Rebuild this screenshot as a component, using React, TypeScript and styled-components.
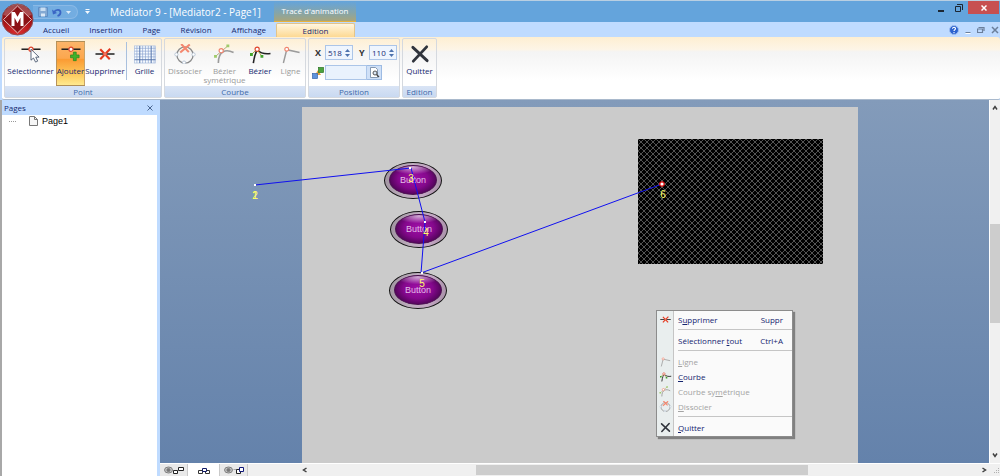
import React from "react";
import styled, { createGlobalStyle, css } from "styled-components";

const Global = createGlobalStyle`
  * { box-sizing: border-box; }
  body { margin: 0; }
  body, button, input { font-family: "Open Sans", "Noto Sans", sans-serif; font-size: 8px; line-height: 10px; color: #15286f; }
  button { border: 0; padding: 0; background: none; }
  svg { display: block; flex: none; }
`;

const Window = styled.div`
  display: flex;
  flex-direction: column;
  height: 100vh;
  min-height: 476px;
  background: #bfdbff;
  position: relative;
  overflow: hidden;
`;

const TitleBar = styled.header`
  display: flex;
  align-items: flex-start;
  height: 22px;
  padding-left: 33px;
  border-top: 1px solid #b9cfe2;
  background: #64a4dc;
`;

const QuickAccess = styled.div`
  display: flex;
  align-items: center;
  gap: 4px;
  width: 45px;
  height: 14px;
  margin-top: 4px;
  padding-left: 5px;
  border: 1px solid #8ab9e6;
  border-left: 0;
  border-radius: 0 7px 7px 0;
  background: #73ade1;
`;

const QuickButton = styled.button`
  display: flex;
  align-items: center;
  justify-content: center;
  height: 12px;
`;

const Customize = styled(QuickButton)`
  width: 18px;
  height: 20px;
`;

const Title = styled.h1`
  margin: 0 0 0 14px;
  width: 164px;
  font-size: 10px;
  font-weight: 400;
  line-height: 22px;
  color: #fff;
  white-space: nowrap;
`;

const ContextTitle = styled.div`
  width: 82px;
  height: 21px;
  border-bottom: 1px solid #e8b23c;
  background: linear-gradient(#64a4dc, #86a5a8 60%, #a8a57c);
  color: #fff;
  text-align: center;
  line-height: 19px;
  white-space: nowrap;
`;

const Spacer = styled.div`
  flex: 1;
`;

const WindowButton = styled.button<{ $close?: boolean }>`
  display: flex;
  align-items: center;
  justify-content: center;
  width: ${(p) => (p.$close ? 31 : 18)}px;
  height: 13px;
  margin-right: ${(p) => (p.$close ? 1 : 0)}px;
  background: ${(p) => (p.$close ? "#c75050" : "none")};
`;

const Orb = styled.button`
  position: absolute;
  left: 1px;
  top: 3px;
  z-index: 2;
`;

const TabRow = styled.nav`
  display: flex;
  align-items: stretch;
  height: 15px;
  padding-left: 33px;
  background: #bfdbff;
`;

const Tab = styled.button<{ $active?: boolean }>`
  padding: 0 10px;
  line-height: 14px;
  white-space: nowrap;
  ${(p) =>
    p.$active &&
    css`
      width: 79px;
      margin-top: 1px;
      border: 1px solid #e3c48a;
      border-bottom: 0;
      border-radius: 2px 2px 0 0;
      background: linear-gradient(#fff6e0, #fdd993);
      line-height: 12px;
    `}
`;

const DocControls = styled.div`
  display: flex;
  align-items: center;
  gap: 6px;
  padding-right: 1px;
`;

const IconButton = styled.button`
  display: flex;
  align-items: center;
  justify-content: center;
`;

const Ribbon = styled.section`
  display: flex;
  gap: 2px;
  margin-left: 2px;
  padding: 1px 2px 1px;
  border-radius: 3px 3px 2px 2px;
  border-bottom: 1px solid #a9b9cc;
  background: linear-gradient(#feefd2, #fdf5e6 20%, #f4f4f4 24%, #fafafa 50%, #fff 70%);
`;

const Group = styled.div`
  display: flex;
  flex-direction: column;
  border: 1px solid #d5d9df;
  border-radius: 2px;
`;

const GroupBody = styled.div`
  display: flex;
  height: 47px;
  padding-top: 2px;
`;

const GroupLabel = styled.div`
  height: 11px;
  background: linear-gradient(#d9e4f5, #c9d9f1);
  color: #3e6aaa;
  text-align: center;
  line-height: 11px;
`;

const Tool = styled.button<{ $w: number; $on?: boolean; $off?: boolean }>`
  display: flex;
  flex-direction: column;
  align-items: center;
  gap: 2px;
  width: ${(p) => p.$w}px;
  padding-top: 2px;
  line-height: 9px;
  color: ${(p) => (p.$off ? "#9a9a9a" : "#15286f")};
  white-space: pre;
  border: 1px solid transparent;
  border-width: 1px 0;
  ${(p) =>
    p.$on &&
    css`
      background: linear-gradient(#fbb469, #fca74e 38%, #fb9a33 40%, #fdc95c 75%, #ffe98f);
      border-color: #b08e57;
      box-shadow: inset 1px 0 #b9935a, inset -1px 0 #c9a368;
    `}
`;

const Separator = styled.div`
  width: 1px;
  height: 38px;
  margin: 1px 1px 0;
  background: #a9c0de;
`;

const PositionBody = styled(GroupBody)`
  flex-direction: column;
  gap: 5px;
  padding: 6px 2px 0 3px;
`;

const FieldRow = styled.div`
  display: flex;
  align-items: center;
  height: 15px;
`;

const AxisLabel = styled.label`
  width: 13px;
  padding-left: 3px;
  font-weight: 700;
  font-size: 9px;
  color: #333;
`;

const Field = styled.span`
  display: flex;
  align-items: center;
  width: 28px;
  height: 15px;
  margin-right: 3px;
  border: 1px solid #abc5e8;
  background: #eef5fe;

  &:last-child { margin-right: 0; }
`;

const NumberInput = styled.input`
  flex: 1;
  min-width: 0;
  height: 13px;
  padding: 0 0 0 2px;
  border: 0;
  background: none;
`;

const Spin = styled.span`
  display: flex;
  flex-direction: column;
  gap: 2px;
  padding-right: 2px;
`;

const NameIcon = styled.span`
  width: 13px;
`;

const NameInput = styled.input`
  width: 42px;
  height: 15px;
  padding: 0 2px;
  border: 1px solid #abc5e8;
  background: #e9f2fd;
`;

const Browse = styled(IconButton)`
  width: 15px;
  height: 15px;
  border: 1px solid #9dbbe3;
  border-left: 0;
  background: #cfe0f7;
`;

const Workspace = styled.main`
  display: flex;
  flex: 1;
  min-height: 0;
`;

const Sidebar = styled.aside`
  display: flex;
  flex-direction: column;
  width: 157px;
  margin-right: 3px;
  border-left: 2px solid #a8a8a8;
  background: #fff;
`;

const SidebarHead = styled.div`
  display: flex;
  align-items: center;
  justify-content: space-between;
  height: 15px;
  padding: 0 4px 0 2px;
  background: #bfdbff;
`;

const TreeItem = styled.div`
  display: flex;
  align-items: center;
  gap: 4px;
  height: 11px;
  padding-left: 6px;
  font-family: "Liberation Sans", sans-serif;
  font-size: 9px;
  color: #000;
`;

const Stage = styled.div`
  display: flex;
  flex-direction: column;
  flex: 1;
  min-width: 0;
`;

const StageTop = styled.div`
  display: flex;
  flex: 1;
  min-height: 0;
`;

const Canvas = styled.div`
  position: relative;
  display: flex;
  flex: 1;
  overflow: hidden;
  padding: 7px 131px 0 142px;
  background: linear-gradient(#839bba, #6482ab);
`;

const Paper = styled.div`
  flex: 1;
  background: #cbcbcb;
`;

const Clip = styled.svg`
  position: absolute;
  left: 478px;
  top: 39px;
`;

const GlossButton = styled.button<{ $x: number; $y: number }>`
  position: absolute;
  left: ${(p) => p.$x}px;
  top: ${(p) => p.$y}px;
  display: flex;
  width: 58px;
  height: 37px;
  padding: 2px 4px 3px;
  border: 1px solid #141414;
  border-radius: 50%;
  background: linear-gradient(100deg, #9f939f, #bdaebd 40%, #c4a8c4 70%, #a58fa5);
`;

const GlossFace = styled.span`
  flex: 1;
  border: 1px solid #4b1150;
  border-radius: 50%;
  background:
    radial-gradient(ellipse 48% 26% at 50% 4%, rgba(255, 255, 255, 0.65), rgba(255, 255, 255, 0) 100%),
    radial-gradient(ellipse at 50% 45%, #a010a8 0%, #85088d 45%, #3d0344 85%, #25022a 100%);
  color: #e2bfe7;
  font-family: "Liberation Sans", sans-serif;
  font-size: 9px;
  line-height: 29px;
  text-align: center;
`;

const PathLayer = styled.svg`
  position: absolute;
  left: 0;
  top: 0;
  pointer-events: none;
`;

const Menu = styled.div`
  position: absolute;
  left: 496px;
  top: 210px;
  width: 137px;
  padding: 1px 0;
  border: 1px solid #8c8c8c;
  background: linear-gradient(90deg, #e9eeee 16px, #c5c5c5 16px, #c5c5c5 17px, #fafafa 17px);
  box-shadow: 2px 2px 1px #808080;
`;

const MenuItem = styled.button<{ $off?: boolean }>`
  display: flex;
  align-items: center;
  width: 100%;
  height: 15px;
  padding: 0 9px 0 2px;
  color: ${(p) => (p.$off ? "#a3a3a3" : "#14246f")};
  text-align: left;

  u { text-underline-offset: 1px; }
`;

const MenuIcon = styled.span`
  width: 19px;
`;

const MenuRule = styled.hr`
  height: 1px;
  margin: 2px 0 3px 21px;
  border: 0;
  background: #c5c5c5;
`;

const VScroll = styled.div`
  display: flex;
  flex-direction: column;
  align-items: center;
  width: 11px;
  padding: 5px 0;
  border-left: 1px solid #fff;
  background: #f0f0f0;
`;

const VThumb = styled.div`
  width: 10px;
  height: 99px;
  margin: 113px 0 auto;
  background: #cdcdcd;
`;

const BottomBar = styled.div`
  display: flex;
  align-items: center;
  height: 13px;
  border-top: 1px solid #fff;
  background: #f0f0f0;
`;

const ViewTab = styled.button<{ $active?: boolean }>`
  display: flex;
  align-items: center;
  justify-content: center;
  width: ${(p) => (p.$active ? 32 : 28)}px;
  height: 12px;
  background: ${(p) => (p.$active ? "#fff" : "#e9e9e9")};
  border-right: 1px solid #c9c9c9;
`;

const HScroll = styled.div`
  display: flex;
  align-items: center;
  flex: 1;
  margin-left: 54px;
  padding-right: 6px;
`;

const HThumb = styled.div`
  width: 332px;
  height: 10px;
  margin: 0 auto 0 168px;
  background: #cdcdcd;
`;

const Chevron = ({ d }: { d: string }) => (
  <svg width="6" height="6" viewBox="0 0 6 6"><path d={d} fill="none" stroke="#404040" strokeWidth="1.5" /></svg>
);

type Kind = "select" | "add" | "remove" | "grid" | "split" | "sym" | "curve" | "line" | "quit";

const shapes: Record<Kind, React.ReactNode> = {
  select: (
    <>
      <path d="M2 4.500H22" stroke="#222" strokeWidth="1.6" />
      <circle cx="12" cy="4.500" r="2.2" fill="#fff" stroke="#e0452c" strokeWidth="1.2" />
      <path d="M12 4.500V16L14.600 13.700L16.800 18L19 17L17 12.800H20.500Z" fill="#fff" stroke="#44536a" strokeWidth="0.900" />
    </>
  ),
  add: (
    <>
      <path d="M2 4.500H22" stroke="#222" strokeWidth="1.6" />
      <circle cx="12" cy="4.500" r="2.2" fill="#fff" stroke="#e0452c" strokeWidth="1.2" />
      <path d="M14.500 7.500h3v3h3v3h-3v3h-3v-3h-3v-3h3z" fill="#3fb32b" stroke="#27801a" strokeWidth="0.700" />
    </>
  ),
  remove: (
    <>
      <path d="M2 9.500H22" stroke="#222" strokeWidth="1.6" />
      <path d="M7 4.500L17 15M17.500 4L7 15" stroke="#e5391f" strokeWidth="2.200" />
      <circle cx="12" cy="9.500" r="1.800" fill="#f3745f" />
    </>
  ),
  grid: (
    <>
      <rect x="1" y="1" width="22" height="18" fill="#f7fbff" stroke="#a9bddd" strokeWidth="0.700" />
      <path
        d="M3.500 1V19M6.500 1V19M9.500 1V19M12.500 1V19M15.500 1V19M18.500 1V19M21.500 1V19M1 3.500H23M1 6.500H23M1 9.500H23M1 12.500H23M1 15.500H23"
        stroke="#8aa2cf" strokeWidth="0.700"
      />
      <path d="M6.500 1V19M18.500 1V19M1 15.500H23" stroke="#46659f" strokeWidth="0.700" />
    </>
  ),
  split: (
    <>
      <circle cx="12" cy="10.500" r="8.500" fill="none" stroke="#8a8a8a" strokeWidth="1.400" />
      <path d="M8 -1L16 7.500M17 -0.500L7 8" stroke="#f4876f" strokeWidth="2.200" />
      <g fill="#fff" stroke="#a9b9cc" strokeWidth="0.800">
        <circle cx="3" cy="10" r="1.700" /><circle cx="21" cy="10" r="1.700" /><circle cx="11" cy="18.500" r="1.700" />
      </g>
    </>
  ),
  sym: (
    <>
      <path d="M5 19C5 6 13 4 21 8" fill="none" stroke="#9b9b9b" strokeWidth="1.700" />
      <path d="M2 12L15 1" stroke="#a9a06a" strokeWidth="0.900" />
      <circle cx="8" cy="6" r="2.200" fill="#fff" stroke="#f0836c" strokeWidth="1.200" />
      <path d="M0.500 10.500h3v3h-3zM13.500 -0.500h3v3h-3z" fill="#9fcb6b" />
    </>
  ),
  curve: (
    <>
      <path d="M5 19C6 11 8 7 9 5C13 9 17 10 23 9" fill="none" stroke="#222" strokeWidth="1.700" />
      <path d="M3 10L9 4.500L14 12" fill="none" stroke="#a89a33" strokeWidth="1" />
      <circle cx="9" cy="4.500" r="2.200" fill="#fff" stroke="#e0452c" strokeWidth="1.200" />
      <path d="M1.500 8.500h3v3h-3zM12.500 10.500h3v3h-3z" fill="#43a52e" />
    </>
  ),
  line: (
    <>
      <path d="M4 19L7.500 5L21 8" fill="none" stroke="#9b9b9b" strokeWidth="1.500" />
      <circle cx="7.500" cy="4.500" r="2" fill="#fff" stroke="#f0836c" strokeWidth="1.200" />
    </>
  ),
  quit: <path d="M4.500 2.500L19.500 16.500M19 2L5 17" stroke="#30343c" strokeWidth="3" strokeLinecap="round" />,
};

const Glyph = ({ kind, small }: { kind: Kind; small?: boolean }) => (
  <svg width={small ? 13 : 24} height={small ? 11 : 20} viewBox="0 -1 24 21" aria-hidden="true">
    {shapes[kind]}
  </svg>
);

const pointTools: { kind: Kind; label: string; w: number; on?: boolean }[] = [
  { kind: "select", label: "Sélectionner", w: 51 },
  { kind: "add", label: "Ajouter", w: 29, on: true },
  { kind: "remove", label: "Supprimer", w: 40 },
];

const curveTools: { kind: Kind; label: string; w: number; off?: boolean }[] = [
  { kind: "split", label: "Dissocier", w: 40, off: true },
  { kind: "sym", label: "Bézier\nsymétrique", w: 39, off: true },
  { kind: "curve", label: "Bézier", w: 32 },
  { kind: "line", label: "Ligne", w: 29, off: true },
];

const Coordinate = ({ axis, value }: { axis: string; value: string }) => (
  <>
    <AxisLabel htmlFor={`pos-${axis}`}>{axis}</AxisLabel>
    <Field>
      <NumberInput id={`pos-${axis}`} defaultValue={value} />
      <Spin>
        <IconButton aria-label={`${axis} +`}>
          <svg width="5" height="3" viewBox="0 0 5 3"><path d="M0 3L2.500 0L5 3Z" fill="#4d72ad" /></svg>
        </IconButton>
        <IconButton aria-label={`${axis} -`}>
          <svg width="5" height="3" viewBox="0 0 5 3"><path d="M0 0L2.500 3L5 0Z" fill="#4d72ad" /></svg>
        </IconButton>
      </Spin>
    </Field>
  </>
);

const Eye = () => (
  <g fill="none" stroke="#777" strokeWidth="0.900">
    <ellipse cx="4.500" cy="4" rx="4" ry="3" fill="#c4c4c4" /><circle cx="4.500" cy="4" r="1.600" fill="#777" />
  </g>
);

export default function App() {
  return (
    <Window>
      <Global />
      <TitleBar>
        <QuickAccess>
          <QuickButton aria-label="Enregistrer">
            <svg width="10" height="10" viewBox="0 0 10 10">
              <path d="M0.500 0.500H9.500V9.500H0.500Z" fill="#83a9d3" stroke="#5f8fc6" />
              <path d="M2.500 0.500H7.500V4H2.500Z" fill="#c9def2" /><path d="M3 6.500H7V9.500H3Z" fill="#dbe9f7" />
            </svg>
          </QuickButton>
          <QuickButton aria-label="Annuler">
            <svg width="10" height="9" viewBox="0 0 10 9">
              <path d="M2 4C4 1 8.500 1 8.500 4.500C8.500 6.500 7 7.500 5.500 8" fill="none" stroke="#3b66c4" strokeWidth="1.800" />
              <path d="M0 1.500L1 6.500L5 5Z" fill="#3b66c4" />
            </svg>
          </QuickButton>
          <QuickButton aria-label="Historique">
            <svg width="5" height="3" viewBox="0 0 5 3"><path d="M0 0H5L2.500 3Z" fill="#dcebfa" /></svg>
          </QuickButton>
        </QuickAccess>
        <Customize aria-label="Personnaliser">
          <svg width="5" height="5" viewBox="0 0 5 5"><path d="M0.500 0H4.500V1H0.500ZM0 2H5L2.500 5Z" fill="#f3f8fd" /></svg>
        </Customize>
        <Title>Mediator 9 - [Mediator2 - Page1]</Title>
        <ContextTitle>Tracé d'animation</ContextTitle>
        <Spacer />
        <WindowButton aria-label="Réduire">
          <svg width="6" height="8" viewBox="0 0 6 8"><path d="M0 7H6" stroke="#1c2733" strokeWidth="2" /></svg>
        </WindowButton>
        <WindowButton aria-label="Restaurer">
          <svg width="8" height="8" viewBox="0 0 8 8">
            <path d="M0.500 2.500H5.500V7.500H0.500ZM2 0.500H7.500V6" fill="none" stroke="#1c2733" />
          </svg>
        </WindowButton>
        <WindowButton $close aria-label="Fermer">
          <svg width="6" height="6" viewBox="0 0 6 6"><path d="M0.500 0.500L5.500 5.500M5.500 0.500L0.500 5.500" stroke="#fff" strokeWidth="1.500" /></svg>
        </WindowButton>
      </TitleBar>
      <Orb aria-label="Menu Mediator">
        <svg width="33" height="33" viewBox="0 0 33 33">
          <defs>
            <radialGradient id="orb" cx="50%" cy="85%" r="80%">
              <stop offset="0" stopColor="#e03030" /><stop offset="0.600" stopColor="#a81418" /><stop offset="1" stopColor="#7d0d11" />
            </radialGradient>
          </defs>
          <circle cx="16.500" cy="16.500" r="15.500" fill="url(#orb)" stroke="#8f5257" />
          <path d="M2.500 12A14.500 14.500 0 0 1 30.500 12Q16 18 2.500 12Z" fill="#fff" opacity="0.250" />
          <path d="M16.500 3L30.500 16.500L16.500 30L2.500 16.500Z" fill="#8c1215" stroke="#e3bcbc" strokeWidth="1" />
          <path d="M12 23V10.500H13L16.500 17L20 10.500H21V23" fill="none" stroke="#fff" strokeWidth="3" />
        </svg>
      </Orb>
      <TabRow>
        {["Accueil", "Insertion", "Page", "Révision", "Affichage"].map((t) => <Tab key={t}>{t}</Tab>)}
        <Tab $active>Edition</Tab>
        <Spacer />
        <DocControls>
          <IconButton aria-label="Aide">
            <svg width="10" height="10" viewBox="0 0 10 10">
              <circle cx="5" cy="5" r="4.500" fill="#2c62cf" stroke="#9dbdf0" />
              <path d="M3.500 3.800C3.500 1.800 6.700 1.900 6.500 3.800C6.400 4.800 5 4.800 5 6M5 7V8.200" fill="none" stroke="#fff" strokeWidth="1.100" />
            </svg>
          </IconButton>
          <IconButton aria-label="Réduire la page">
            <svg width="6" height="8" viewBox="0 0 6 8"><path d="M0.500 6.500H5.500" stroke="#6b7f9b" /><path d="M0.500 7.500H5.500" stroke="#fff" /></svg>
          </IconButton>
          <IconButton aria-label="Restaurer la page">
            <svg width="8" height="8" viewBox="0 0 8 8"><path d="M0.500 3H5.500V6.500H0.500ZM1.500 1.500H7V5" fill="none" stroke="#6b7f9b" strokeWidth="1.200" /></svg>
          </IconButton>
          <IconButton aria-label="Fermer la page">
            <svg width="8" height="8" viewBox="0 0 8 8"><path d="M1 1L7 7M7 1L1 7" stroke="#6b7f9b" strokeWidth="1.500" /></svg>
          </IconButton>
        </DocControls>
      </TabRow>
      <Ribbon>
        <Group>
          <GroupBody>
            {pointTools.map((t) => (
              <Tool key={t.kind} $w={t.w} $on={t.on}><Glyph kind={t.kind} />{t.label}</Tool>
            ))}
            <Separator />
            <Tool $w={33}><Glyph kind="grid" />Grille</Tool>
          </GroupBody>
          <GroupLabel>Point</GroupLabel>
        </Group>
        <Group>
          <GroupBody>
            {curveTools.map((t) => (
              <Tool key={t.kind} $w={t.w} $off={t.off}><Glyph kind={t.kind} />{t.label}</Tool>
            ))}
          </GroupBody>
          <GroupLabel>Courbe</GroupLabel>
        </Group>
        <Group>
          <PositionBody>
            <FieldRow>
              <Coordinate axis="X" value="518" />
              <Coordinate axis="Y" value="110" />
            </FieldRow>
            <FieldRow>
              <NameIcon>
                <svg width="12" height="12" viewBox="0 0 12 12">
                  <path d="M3 8L6 3L9 8Z" fill="#e9a33a" />
                  <rect x="6.500" y="0.500" width="5" height="5" fill="#4aa33c" stroke="#2b7324" strokeWidth="0.700" />
                  <rect x="0.500" y="6.500" width="5" height="5" fill="#5f93dd" stroke="#3565ab" strokeWidth="0.700" />
                </svg>
              </NameIcon>
              <NameInput aria-label="Objet" />
              <Browse aria-label="Parcourir">
                <svg width="11" height="11" viewBox="0 0 11 11">
                  <path d="M1.500 0.500H6.500L8.500 2.500V10.500H1.500Z" fill="#fff" stroke="#7b8ea8" strokeWidth="0.900" />
                  <circle cx="6" cy="6" r="2" fill="#dbe7f5" stroke="#444" strokeWidth="0.900" />
                  <path d="M7.500 7.500L10 10" stroke="#444" strokeWidth="1.300" />
                </svg>
              </Browse>
            </FieldRow>
          </PositionBody>
          <GroupLabel>Position</GroupLabel>
        </Group>
        <Group>
          <GroupBody><Tool $w={33}><Glyph kind="quit" />Quitter</Tool></GroupBody>
          <GroupLabel>Edition</GroupLabel>
        </Group>
      </Ribbon>
      <Workspace>
        <Sidebar>
          <SidebarHead>
            Pages
            <IconButton aria-label="Fermer le volet">
              <svg width="6" height="6" viewBox="0 0 6 6"><path d="M0.500 0.500L5.500 5.500M5.500 0.500L0.500 5.500" stroke="#4a6690" /></svg>
            </IconButton>
          </SidebarHead>
          <TreeItem>
            <svg width="17" height="8" viewBox="0 0 17 8"><path d="M1 4.500H9" stroke="#999" strokeDasharray="1 1" /></svg>
            <svg width="9" height="10" viewBox="0 0 9 10">
              <path d="M0.500 0.500H5.500L8.500 3.500V9.500H0.500Z" fill="#f6f6f6" stroke="#777" /><path d="M5.500 0.500V3.500H8.500" fill="none" stroke="#777" />
            </svg>
            Page1
          </TreeItem>
        </Sidebar>
        <Stage>
          <StageTop>
            <Canvas>
              <Paper />
              <Clip width="186" height="126">
                <defs>
                  <pattern id="hatch" width="6" height="6" patternUnits="userSpaceOnUse">
                    <path d="M0 0L6 6M6 0L0 6" stroke="#777" strokeWidth="0.700" />
                  </pattern>
                </defs>
                <rect width="185" height="125" fill="#000" />
                <rect width="185" height="125" fill="url(#hatch)" />
              </Clip>
              <GlossButton $x={224} $y={62}><GlossFace>Button</GlossFace></GlossButton>
              <GlossButton $x={230} $y={111}><GlossFace>Button</GlossFace></GlossButton>
              <GlossButton $x={229} $y={172}><GlossFace>Button</GlossFace></GlossButton>
              <PathLayer width="560" height="200">
                <path d="M95 85L251 68L265 122L261 173L502 84" fill="none" stroke="#1010f0" />
                <g fill="#fff">
                  <rect x="94" y="84" width="2" height="2" /><rect x="249" y="67" width="2" height="2" />
                  <rect x="264" y="121" width="2" height="2" /><rect x="261" y="172" width="2" height="2" />
                </g>
                <circle cx="502" cy="84" r="2.200" fill="#fff" stroke="#e01010" strokeWidth="1.200" />
                <g fill="#ffff66" fontFamily="Liberation Sans, sans-serif" fontSize="10" textAnchor="middle">
                  <text x="95" y="99">1</text><text x="95" y="99">2</text><text x="251" y="82">3</text>
                  <text x="266" y="136">4</text><text x="262" y="187">5</text><text x="503" y="98">6</text>
                </g>
              </PathLayer>
              <Menu>
                <MenuItem><MenuIcon><Glyph kind="remove" small /></MenuIcon><span>S<u>u</u>pprimer</span><Spacer />Suppr</MenuItem>
                <MenuRule />
                <MenuItem><MenuIcon /><span>Sélectionner <u>t</u>out</span><Spacer />Ctrl+A</MenuItem>
                <MenuRule />
                <MenuItem $off><MenuIcon><Glyph kind="line" small /></MenuIcon><span><u>L</u>igne</span></MenuItem>
                <MenuItem><MenuIcon><Glyph kind="curve" small /></MenuIcon><span><u>C</u>ourbe</span></MenuItem>
                <MenuItem $off><MenuIcon><Glyph kind="sym" small /></MenuIcon><span>Courbe sy<u>m</u>étrique</span></MenuItem>
                <MenuItem $off><MenuIcon><Glyph kind="split" small /></MenuIcon><span><u>D</u>issocier</span></MenuItem>
                <MenuRule />
                <MenuItem><MenuIcon><Glyph kind="quit" small /></MenuIcon><span><u>Q</u>uitter</span></MenuItem>
              </Menu>
            </Canvas>
            <VScroll>
              <Chevron d="M1 4.500L3 1.500L5 4.500" />
              <VThumb />
              <Chevron d="M1 1.500L3 4.500L5 1.500" />
            </VScroll>
          </StageTop>
          <BottomBar>
            <ViewTab aria-label="Vue précédente">
              <svg width="20" height="9" viewBox="0 0 20 9">
                <Eye />
                <path d="M9.500 4.500H13.500V7.500H9.500Z" fill="#fff" stroke="#222" /><path d="M14.500 1.500H19.500V4.500H14.500Z" fill="#fff" stroke="#222" />
              </svg>
            </ViewTab>
            <ViewTab $active aria-label="Vue page">
              <svg width="12" height="9" viewBox="0 0 12 9">
                <path d="M0.500 4.500H4.500V7.500H0.500ZM7.500 4.500H11.500V7.500H7.500Z" fill="#fff" stroke="#333" />
                <path d="M4.500 2.500H8.500V5.500H4.500Z" fill="#fff" stroke="#111a66" />
              </svg>
            </ViewTab>
            <ViewTab aria-label="Vue suivante">
              <svg width="20" height="9" viewBox="0 0 20 9">
                <Eye />
                <path d="M9.500 3.500H12.500V6.500" fill="none" stroke="#aaa" />
                <path d="M12.500 3.500H16.500V7.500H12.500Z" fill="#fff" stroke="#222" /><path d="M15.500 1.500H19.500V5.500H15.500Z" fill="#fff" stroke="#11187a" />
              </svg>
            </ViewTab>
            <HScroll>
              <Chevron d="M4.500 1L1.500 3L4.500 5" />
              <HThumb />
              <Chevron d="M1.500 1L4.500 3L1.500 5" />
            </HScroll>
            {/* window resize grip */}
            <svg width="7" height="12" viewBox="0 0 7 12" aria-hidden="true">
              <path d="M5 4h1v1h-1zM3 6h1v1h-1zM5 6h1v1h-1zM1 8h1v1h-1zM3 8h1v1h-1zM5 8h1v1h-1z" fill="#b0b0b0" />
            </svg>
          </BottomBar>
        </Stage>
      </Workspace>
    </Window>
  );
}
